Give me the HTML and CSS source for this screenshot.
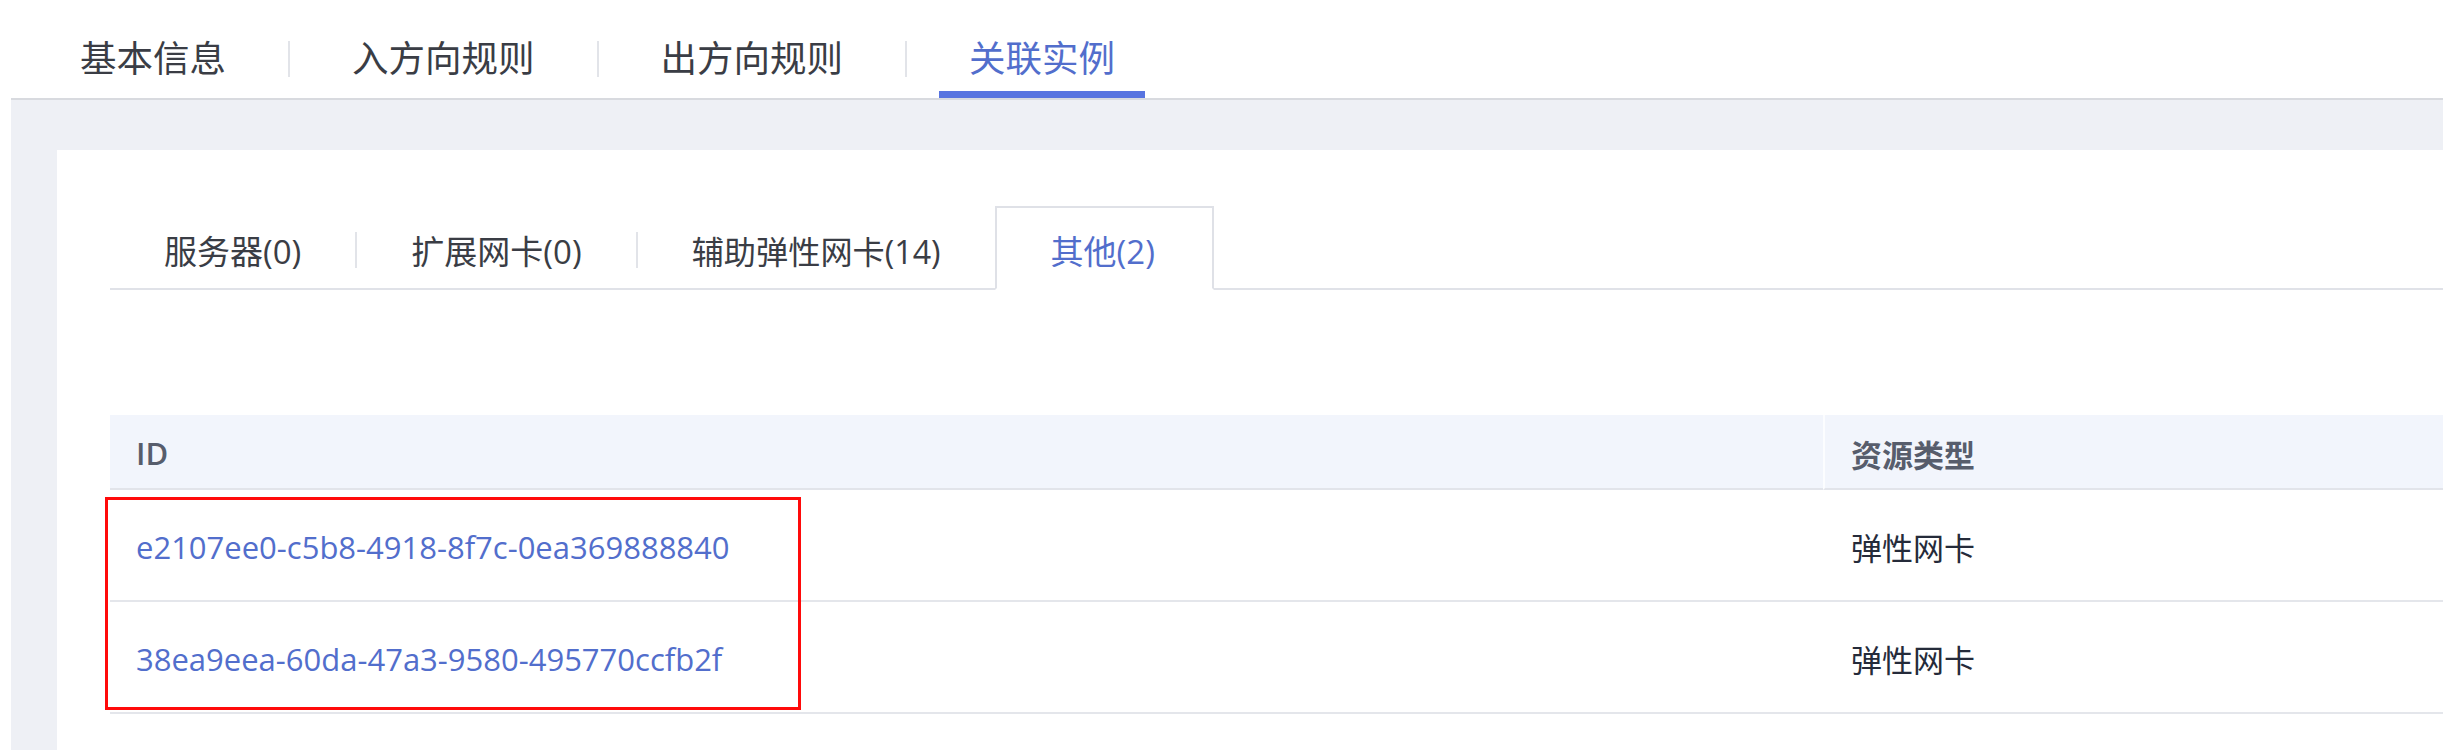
FILE: index.html
```html
<!DOCTYPE html>
<html lang="zh-CN">
<head>
<meta charset="utf-8">
<title>关联实例</title>
<link rel="stylesheet" href="styles.css">
</head>
<body>
<div class="topbar">
  <div class="top-tab">基本信息</div>
  <span class="top-sep"></span>
  <div class="top-tab">入方向规则</div>
  <span class="top-sep"></span>
  <div class="top-tab">出方向规则</div>
  <span class="top-sep"></span>
  <div class="top-tab active">关联实例</div>
</div>
<div class="content">
  <div class="card">
    <div class="sub-tabs">
      <div class="sub-tab">服务器(0)</div>
      <span class="sub-sep"></span>
      <div class="sub-tab">扩展网卡(0)</div>
      <span class="sub-sep"></span>
      <div class="sub-tab narrow">辅助弹性网卡(14)</div>
      <div class="sub-tab active">其他(2)</div>
    </div>
    <div class="table">
      <div class="th">ID</div>
      <div class="th th-second">资源类型</div>
      <div class="td"><a class="link">e2107ee0-c5b8-4918-8f7c-0ea369888840</a></div>
      <div class="td td-second">弹性网卡</div>
      <div class="td"><a class="link">38ea9eea-60da-47a3-9580-495770ccfb2f</a></div>
      <div class="td td-second">弹性网卡</div>
      <div class="highlight"></div>
    </div>
  </div>
</div>
</body>
</html>
```
FILE: styles.css
```css
html, body {
  margin: 0;
  padding: 0;
  background: #ffffff;
  overflow: hidden;
  font-family: "Open Sans", "Noto Sans CJK SC", sans-serif;
}

.topbar {
  height: 98px;
  display: flex;
  align-items: center;
  padding-left: 50px;
  background: #ffffff;
}

.top-tab {
  height: 98px;
  box-sizing: border-box;
  padding: 22px 30px 0;
  border-bottom: 7px solid transparent;
  display: flex;
  align-items: center;
  font-size: 36.5px;
  color: #3a3d45;
  white-space: nowrap;
}

.top-tab.active {
  color: #526ecc;
  border-bottom-color: #5874e0;
}

.top-sep {
  width: 2px;
  height: 36px;
  margin: 20px 32px 0;
  background: #e2e4e9;
}

.content {
  margin-left: 11px;
  border-top: 2px solid #d8dadf;
  background: #eef0f5;
  padding: 50px 0 0 46px;
}

.card {
  background: #ffffff;
  padding: 56px 0 0 53px;
  height: 544px;
}

.sub-tabs {
  display: flex;
  align-items: flex-end;
  height: 82px;
  border-bottom: 2px solid #e0e2e8;
}

.sub-tab {
  height: 84px;
  box-sizing: border-box;
  margin-bottom: -2px;
  padding: 4px 52px 0;
  border: 2px solid transparent;
  border-bottom: 2px solid transparent;
  display: flex;
  align-items: center;
  font-size: 33px;
  color: #3a3d45;
  white-space: nowrap;
}

.sub-tab.narrow {
  font-size: 32.2px;
}

.sub-tab.active {
  color: #526ecc;
  background: #ffffff;
  border-color: #dfe1e7;
  border-bottom-color: #ffffff;
  padding-left: 54px;
  padding-right: 57px;
}

.sub-sep {
  align-self: center;
  width: 2px;
  height: 36px;
  margin-top: 6px;
  background: #e2e4e9;
}

.table {
  position: relative;
  margin-top: 125px;
  display: grid;
  grid-template-columns: 1713px 1fr;
}

.th {
  height: 70px;
  padding: 3px 0 0 26px;
  display: flex;
  align-items: center;
  background: #f2f5fc;
  border-bottom: 2px solid #e2e4ea;
  font-size: 31px;
  font-weight: 600;
  color: #575d6c;
}

.th-second {
  border-left: 2px solid #fcfdff;
}

.td {
  height: 107px;
  padding: 3px 0 0 26px;
  display: flex;
  align-items: center;
  border-bottom: 2px solid #e4e6eb;
  font-size: 31px;
  color: #252b3a;
}

.td-second {
  padding-left: 28px;
}

.link {
  color: #526ecc;
  text-decoration: none;
}

.highlight {
  position: absolute;
  left: -5px;
  top: 82px;
  width: 696px;
  height: 213px;
  box-sizing: border-box;
  border: 3px solid #ff0a0a;
}
```
